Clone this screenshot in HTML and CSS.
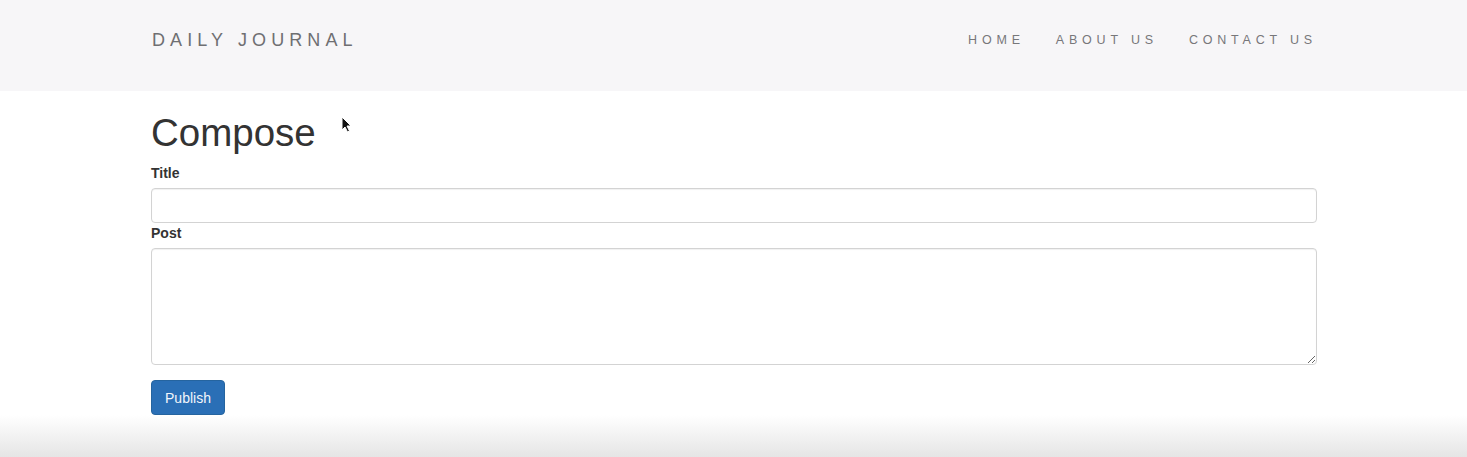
FILE: index.html
```html
<!DOCTYPE html>
<html>
<head>
<meta charset="utf-8">
<link rel="stylesheet" href="styles.css">
</head>
<body>
<nav class="navbar">
  <div class="container nav-inner">
    <a class="brand">DAILY JOURNAL</a>
    <ul class="nav-links">
      <li>HOME</li>
      <li>ABOUT US</li>
      <li>CONTACT US</li>
    </ul>
  </div>
</nav>
<main class="container main">
  <h1 class="title">Compose</h1>
  <form class="form">
    <label class="label">Title</label>
    <input class="field" type="text">
    <label class="label">Post</label>
    <textarea class="field area"></textarea>
    <button class="btn" type="button">Publish</button>
  </form>
</main>
<div class="fade"></div>
<svg class="cursor" width="12" height="18" viewBox="0 0 12 18"><path d="M1 1 L1 14 L4 11 L6.5 16 L8.5 15 L6 10 L10 10 Z" fill="#111" stroke="#fff" stroke-width="1"/></svg>
</body>
</html>
```
FILE: styles.css
```css
html, body { margin: 0; padding: 0; }
body {
  font-family: "Liberation Sans", Arial, sans-serif;
  background: #fff;
  color: #333;
  height: 457px;
  overflow: hidden;
  position: relative;
}
.container {
  width: 1166px;
  margin-left: 151px;
}
.navbar {
  background: #f7f6f8;
  height: 91px;
}
.nav-inner {
  display: flex;
  justify-content: space-between;
  align-items: center;
  height: 80px;
}
.brand {
  font-size: 18px;
  letter-spacing: 5.1px;
  color: #6f6f72;
  margin-left: 1px;
}
.nav-links {
  list-style: none;
  margin: 0;
  padding: 0;
  display: flex;
  gap: 31px;
}
.nav-links li {
  font-size: 12.5px;
  letter-spacing: 4.8px;
  color: #77777a;
}
.main {
  padding-top: 20px;
}
.title {
  font-size: 38.5px;
  font-weight: 400;
  margin: 0 0 10px 0;
  line-height: 44px;
  color: #333;
}
.form {
  display: flex;
  flex-direction: column;
  align-items: flex-start;
}
.label {
  font-size: 14px;
  font-weight: 700;
  line-height: 17px;
  margin-bottom: 6px;
  color: #333;
}
.field {
  width: 100%;
  box-sizing: border-box;
  height: 35px;
  border: 1px solid #d3d3d3;
  border-radius: 4px;
  box-shadow: inset 0 1px 1px rgba(0,0,0,0.06);
  margin: 0 0 2px 0;
  font-family: inherit;
}
.area {
  height: 117px;
  resize: vertical;
  margin-bottom: 15px;
}
.btn {
  background: #2a6fb6;
  color: #f2f6fb;
  border: 1px solid #25649f;
  border-radius: 4px;
  height: 35px;
  width: 74px;
  font-family: inherit;
  font-size: 14px;
  padding: 0;
}
.fade {
  position: absolute;
  left: 0;
  right: 0;
  bottom: 0;
  height: 42px;
  background: linear-gradient(to bottom, rgba(255,255,255,0), #e5e5e5);
}
.cursor {
  position: absolute;
  left: 341px;
  top: 116px;
}
```
